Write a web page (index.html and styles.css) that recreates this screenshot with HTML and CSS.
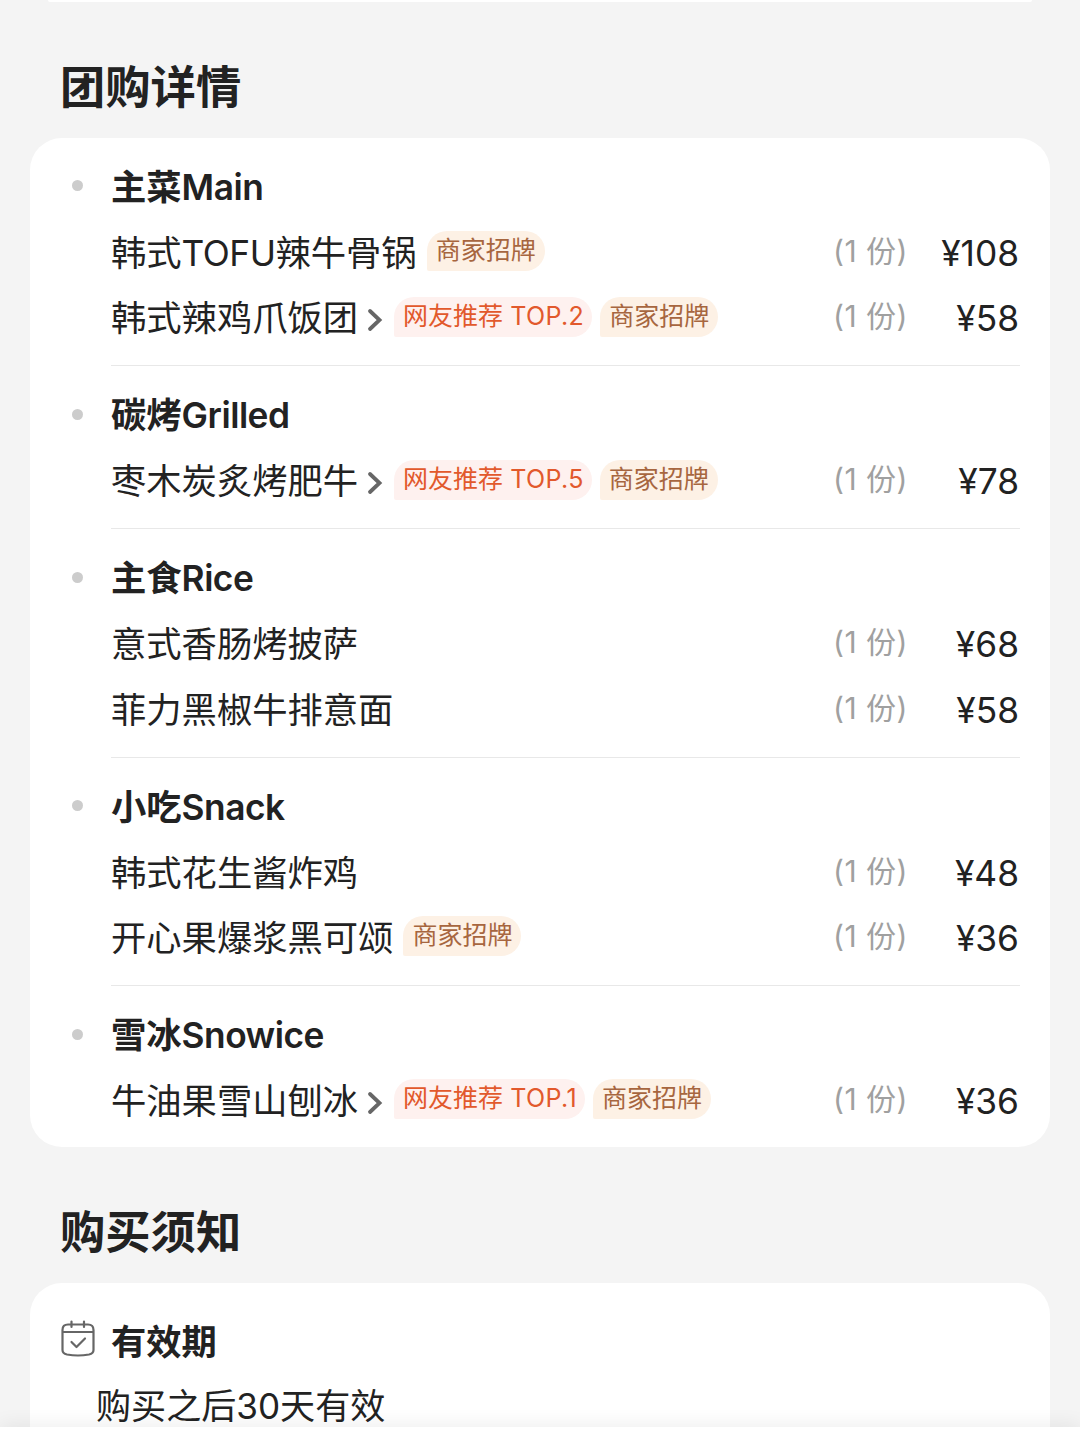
FILE: index.html
```html
<!DOCTYPE html>
<html lang="zh-CN">
<head>
<meta charset="UTF-8">
<meta name="viewport" content="width=device-width, initial-scale=1.0">
<title>团购详情</title>
<link rel="stylesheet" href="styles.css">
</head>
<body>

  <div class="prev-card"></div>

  <h2 class="title">团购详情</h2>
  <div class="card">
    <section class="group">
      <h3 class="group-name">主菜<span class="en">Main</span></h3>
      <div class="row">
        <span class="name">韩式<span class="tofu">TOFU</span>辣牛骨锅</span>
        <span class="tag shop">商家招牌</span>
        <span class="count">(1 份)</span><span class="price">¥108</span>
      </div>
      <div class="row">
        <span class="name">韩式辣鸡爪饭团</span>
        <svg class="arrow" viewBox="0 0 16 24"><path d="M3 3l9.500 9L3 21"/></svg>
        <span class="tag top">网友推荐 <span class="rank">TOP.2</span></span>
        <span class="tag shop">商家招牌</span>
        <span class="count">(1 份)</span><span class="price">¥58</span>
      </div>
    </section>

    <section class="group">
      <h3 class="group-name">碳烤<span class="en">Grilled</span></h3>
      <div class="row">
        <span class="name">枣木炭炙烤肥牛</span>
        <svg class="arrow" viewBox="0 0 16 24"><path d="M3 3l9.500 9L3 21"/></svg>
        <span class="tag top">网友推荐 <span class="rank">TOP.5</span></span>
        <span class="tag shop">商家招牌</span>
        <span class="count">(1 份)</span><span class="price">¥78</span>
      </div>
    </section>

    <section class="group">
      <h3 class="group-name">主食<span class="en">Rice</span></h3>
      <div class="row">
        <span class="name">意式香肠烤披萨</span>
        <span class="count">(1 份)</span><span class="price">¥68</span>
      </div>
      <div class="row">
        <span class="name">菲力黑椒牛排意面</span>
        <span class="count">(1 份)</span><span class="price">¥58</span>
      </div>
    </section>

    <section class="group">
      <h3 class="group-name">小吃<span class="en">Snack</span></h3>
      <div class="row">
        <span class="name">韩式花生酱炸鸡</span>
        <span class="count">(1 份)</span><span class="price">¥48</span>
      </div>
      <div class="row">
        <span class="name">开心果爆浆黑可颂</span>
        <span class="tag shop">商家招牌</span>
        <span class="count">(1 份)</span><span class="price">¥36</span>
      </div>
    </section>

    <section class="group">
      <h3 class="group-name">雪冰<span class="en">Snowice</span></h3>
      <div class="row">
        <span class="name">牛油果雪山刨冰</span>
        <svg class="arrow" viewBox="0 0 16 24"><path d="M3 3l9.500 9L3 21"/></svg>
        <span class="tag top">网友推荐 <span class="rank">TOP.1</span></span>
        <span class="tag shop">商家招牌</span>
        <span class="count">(1 份)</span><span class="price">¥36</span>
      </div>
    </section>
  </div>

  <h2 class="title">购买须知</h2>
  <div class="card notice">
    <h3 class="notice-name">
      <svg class="calendar" viewBox="0 0 36 38">
        <path d="M2.500 12V10Q2.500 4.500 8 4.500H28Q33.500 4.500 33.500 10V30Q33.500 33.500 29 34.500Q18 36.500 7 34.500Q2.500 33.500 2.500 30V12H33.500"/>
        <path d="M11.500 1.500V7M24 1.500V7"/>
        <path d="M11.500 22L16.500 27L25 18.500"/>
      </svg>
      有效期
    </h3>
    <p class="notice-text">购买之后30天有效</p>
  </div>

  <!-- barra inferior fija -->
  <div class="bottom-bar"></div>

</body>
</html>
```
FILE: styles.css
```css
* {
  box-sizing: border-box;
}

body {
  margin: 0;
  height: 1440px;
  overflow: hidden;
  background-color: #f4f4f4;
  color: #222;
  font-family: Inter, "Noto Sans CJK SC", sans-serif;
  font-size: 35.3px;
}

h2, h3, p {
  margin: 0;
}

.prev-card {
  height: 2px;
  margin: 0 48px;
  background-color: #fff;
  border-radius: 0 0 8px 8px;
}

.title {
  height: 136px;
  padding: 52px 0 0 60px;
  font-size: 45.3px;
  font-weight: 700;
  line-height: 68px;
}

.card {
  height: 1009px;
  margin: 0 30px;
  padding: 0 30px 0 81px;
  background-color: #fff;
  border-radius: 32px;
}

.group {
  padding: 16.3px 0 14.9px;
  border-bottom: 1px solid #e8e8e8;
}

.group:last-child {
  border-bottom: none;
}

.group-name {
  display: flex;
  align-items: center;
  height: 65.4px;
  padding-top: 2px;
  font-size: 35.3px;
  font-weight: 700;
  line-height: 50px;
}

.en {
  font-weight: 600;
  letter-spacing: -0.5px;
}

/* punto gris a la izquierda del grupo */
.group-name::before {
  content: "";
  width: 11px;
  height: 11px;
  margin: -4px 28px 0 -39px;
  border-radius: 50%;
  background-color: #ccc;
}

.row {
  display: flex;
  align-items: center;
  height: 65.4px;
  line-height: 50px;
  white-space: nowrap;
}

.name,
.price {
  padding-top: 3px;
}

.tofu {
  letter-spacing: -0.5px;
}

.arrow {
  width: 16px;
  height: 24px;
  margin: 5px 1px 0 9px;
  fill: none;
  stroke: #666;
  stroke-width: 3.8;
  stroke-linecap: round;
}

.tag {
  height: 40px;
  margin: -2px 0 0 10px;
  padding: 0 9px;
  border-radius: 20px 20px 20px 2px;
  font-size: 25px;
  line-height: 39px;
}

.shop {
  background-color: #fdf1e5;
  color: #a7663f;
}

.top {
  padding-right: 8px;
  background-color: #fef1ef;
  color: #e2592c;
}

.top + .shop {
  margin-left: 8px;
}

.rank {
  letter-spacing: 0.4px;
}

.count {
  margin-left: auto;
  margin-top: -3px;
  color: #a0a0a0;
  font-size: 30px;
  letter-spacing: 0.5px;
}

.price {
  width: 112px;
  padding-right: 1px;
  text-align: right;
}

.notice {
  height: 200px;
  padding: 24px 31px;
}

.notice-name {
  display: flex;
  align-items: center;
  height: 65px;
  font-size: 35.3px;
  font-weight: 700;
}

.calendar {
  width: 36px;
  height: 38px;
  margin-top: -1px;
  margin-right: 15px;
  margin-left: -1px;
  fill: none;
  stroke: #666;
  stroke-width: 2.2;
  stroke-linecap: round;
  stroke-linejoin: round;
}

.notice-text {
  padding: 2px 0 0 35px;
  font-size: 35.1px;
  line-height: 65px;
}

.bottom-bar {
  position: absolute;
  left: 0;
  right: 0;
  bottom: 0;
  height: 13px;
  background-color: #fff;
  box-shadow: 0 0 20px rgba(0, 0, 0, 0.1);
}
```
